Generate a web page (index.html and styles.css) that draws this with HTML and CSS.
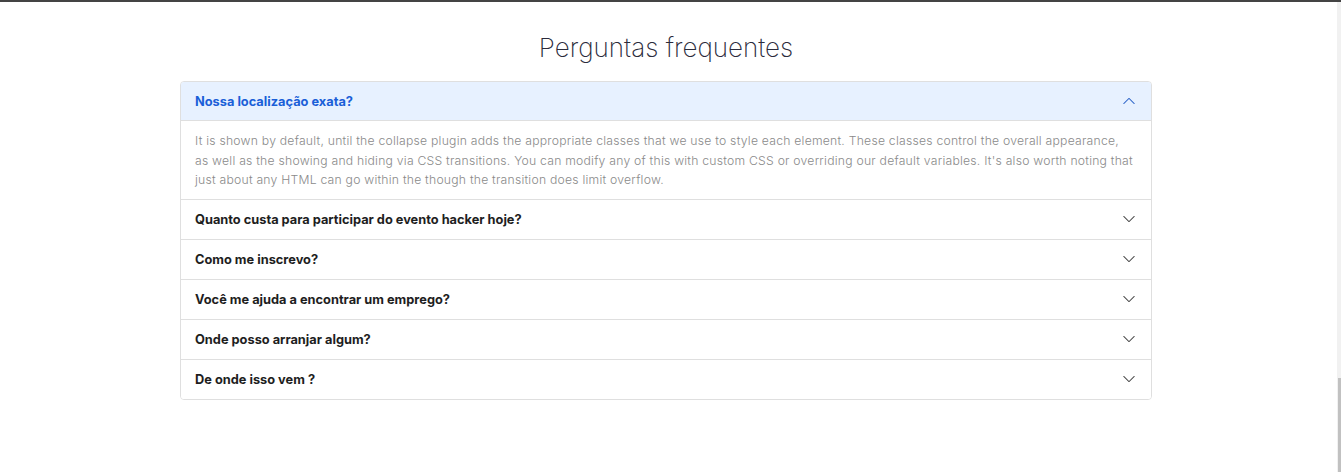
FILE: index.html
```html
<!DOCTYPE html>
<html lang="pt">
<head>
<meta charset="utf-8">
<title>Perguntas frequentes</title>
<link rel="stylesheet" href="styles.css">
</head>
<body>
<div class="topline"></div>
<section class="faq">
  <h2 class="faq-title">Perguntas frequentes</h2>
  <div class="accordion">
    <div class="item">
      <button class="item-head active">
        <span>Nossa localização exata?</span>
        <svg class="chev up" viewBox="0 0 16 16" width="14" height="14"><path d="M1.646 4.646a.5.5 0 0 1 .708 0L8 10.293l5.646-5.647a.5.5 0 0 1 .708.708l-6 6a.5.5 0 0 1-.708 0l-6-6a.5.5 0 0 1 0-.708z"/></svg>
      </button>
      <div class="item-body">It is shown by default, until the collapse plugin adds the appropriate classes that we use to style each element. These classes control the overall appearance,<br>as well as the showing and hiding via CSS transitions. You can modify any of this with custom CSS or overriding our default variables. It's also worth noting that<br>just about any HTML can go within the though the transition does limit overflow.</div>
    </div>
    <div class="item">
      <button class="item-head"><span>Quanto custa para participar do evento hacker hoje?</span>
        <svg class="chev" viewBox="0 0 16 16" width="14" height="14"><path d="M1.646 4.646a.5.5 0 0 1 .708 0L8 10.293l5.646-5.647a.5.5 0 0 1 .708.708l-6 6a.5.5 0 0 1-.708 0l-6-6a.5.5 0 0 1 0-.708z"/></svg></button>
    </div>
    <div class="item">
      <button class="item-head"><span>Como me inscrevo?</span>
        <svg class="chev" viewBox="0 0 16 16" width="14" height="14"><path d="M1.646 4.646a.5.5 0 0 1 .708 0L8 10.293l5.646-5.647a.5.5 0 0 1 .708.708l-6 6a.5.5 0 0 1-.708 0l-6-6a.5.5 0 0 1 0-.708z"/></svg></button>
    </div>
    <div class="item">
      <button class="item-head"><span>Você me ajuda a encontrar um emprego?</span>
        <svg class="chev" viewBox="0 0 16 16" width="14" height="14"><path d="M1.646 4.646a.5.5 0 0 1 .708 0L8 10.293l5.646-5.647a.5.5 0 0 1 .708.708l-6 6a.5.5 0 0 1-.708 0l-6-6a.5.5 0 0 1 0-.708z"/></svg></button>
    </div>
    <div class="item">
      <button class="item-head"><span>Onde posso arranjar algum?</span>
        <svg class="chev" viewBox="0 0 16 16" width="14" height="14"><path d="M1.646 4.646a.5.5 0 0 1 .708 0L8 10.293l5.646-5.647a.5.5 0 0 1 .708.708l-6 6a.5.5 0 0 1-.708 0l-6-6a.5.5 0 0 1 0-.708z"/></svg></button>
    </div>
    <div class="item">
      <button class="item-head"><span>De onde isso vem ?</span>
        <svg class="chev" viewBox="0 0 16 16" width="14" height="14"><path d="M1.646 4.646a.5.5 0 0 1 .708 0L8 10.293l5.646-5.647a.5.5 0 0 1 .708.708l-6 6a.5.5 0 0 1-.708 0l-6-6a.5.5 0 0 1 0-.708z"/></svg></button>
    </div>
  </div>
</section>
<div class="scrollbar"><div class="thumb"></div></div>
</body>
</html>
```
FILE: styles.css
```css
* { box-sizing: border-box; }
html, body { margin: 0; padding: 0; background: #fff; }
body {
  font-family: Inter, "Noto Sans", sans-serif;
  color: #212529;
  height: 472px;
  overflow: hidden;
}
.topline { height: 2px; background: #444; }
.faq {
  width: 972px;
  margin-left: 180px;
  padding-top: 30px;
}
.faq-title {
  margin: 0 0 17px;
  text-align: center;
  font-weight: 200;
  font-size: 26px;
  line-height: 32px;
  color: #2b2b3b;
}
.accordion {
  border: 1px solid #dfdfdf;
  border-radius: 4px;
  overflow: hidden;
}
.item + .item { border-top: 1px solid #dfdfdf; }
.item-head {
  display: flex;
  align-items: center;
  justify-content: space-between;
  width: 100%;
  height: 39px;
  padding: 0 15px 0 14px;
  border: 0;
  background: #fff;
  font-family: inherit;
  font-weight: 700;
  font-size: 12.8px;
  color: #1e1e1e;
  text-align: left;
  cursor: pointer;
}
.item-head.active {
  background: #e7f1ff;
  color: #1a5fd8;
  border-bottom: 1px solid #dfdfdf;
}
.chev { fill: #444; }
.chev.up { transform: rotate(180deg); fill: #2a63c8; }
.item-body {
  padding: 10px 14px 9px;
  font-size: 12.2px;
  letter-spacing: 0.23px;
  line-height: 19.5px;
  font-weight: 300;
  color: #8a8a8a;
  white-space: nowrap;
}
.scrollbar {
  position: fixed;
  top: 2px;
  right: 0;
  bottom: 0;
  width: 4px;
  background: #f1f1f1;
}
.thumb {
  position: absolute;
  left: 1px;
  right: 0;
  bottom: 0;
  height: 94px;
  background: #c1c1c1;
}
```
